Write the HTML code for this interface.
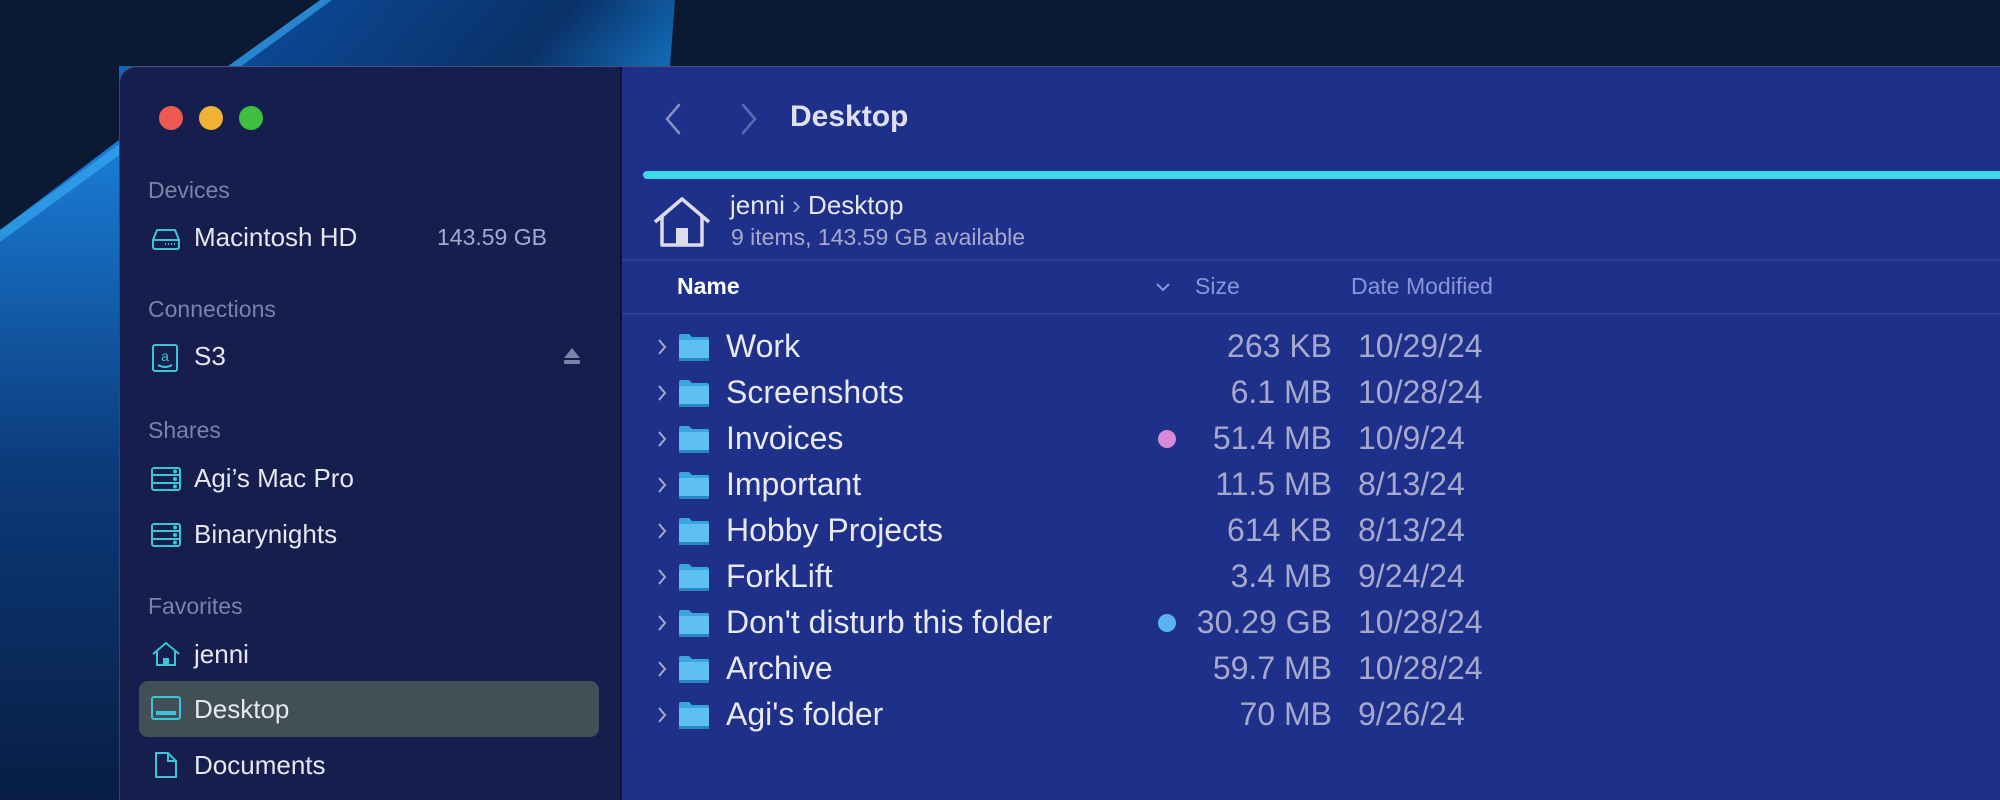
<!DOCTYPE html>
<html><head><meta charset="utf-8"><style>
*{margin:0;padding:0;box-sizing:border-box}
html,body{width:2000px;height:800px;overflow:hidden}
body{background:#0a1a33;font-family:"Liberation Sans",sans-serif;position:relative}
.abs{position:absolute;white-space:nowrap}
.win{position:absolute;left:119px;top:66px;width:1900px;height:734px;border-radius:18px 0 0 0;overflow:hidden;border-top:1px solid #4a5280;border-left:1px solid #3a4270}
.side{position:absolute;left:0;top:0;width:500px;height:100%;background:#151e4d}
.main{position:absolute;left:500px;top:0;width:1400px;height:100%;background:#1e308a;border-left:2px solid #0c1233}
.hdr{color:#7d83a6;font-size:23px}
.item{color:#e6e6ee;font-size:26px}
.name{color:#e8e8f0;font-size:32px}
.num{color:#a6a9cc;font-size:32px}
</style></head><body>
<svg class="abs" style="left:0;top:0" width="2000" height="800">
<defs>
<linearGradient id="g1" x1="0" y1="0.3" x2="1" y2="0.6"><stop offset="0" stop-color="#1d8fea"/><stop offset="0.25" stop-color="#0c4c9c"/><stop offset="0.7" stop-color="#0a3168"/><stop offset="0.95" stop-color="#1478c8"/><stop offset="1" stop-color="#22b0f0"/></linearGradient>
<linearGradient id="g3" x1="0" y1="0" x2="0" y2="1"><stop offset="0" stop-color="#1a7ed8"/><stop offset="0.5" stop-color="#0c3a7a"/><stop offset="1" stop-color="#081e44"/></linearGradient>
</defs>
<polygon points="0,230 320,0 675,0 670,66 119,66 119,140 0,240" fill="url(#g1)"/>
<polygon points="0,230 119,140 119,800 0,800" fill="url(#g3)"/>
<polygon points="0,230 320,0 332,0 0,242" fill="#3ab0f8" opacity="0.6"/>
</svg>
<div class="win">
 <div class="side">
  <div class="abs" style="left:39px;top:39px;width:24px;height:24px;border-radius:50%;background:#ec5a52"></div>
  <div class="abs" style="left:79px;top:39px;width:24px;height:24px;border-radius:50%;background:#efb232"></div>
  <div class="abs" style="left:119px;top:39px;width:24px;height:24px;border-radius:50%;background:#3ebf3f"></div>

  <div class="abs hdr" style="left:28px;top:110px">Devices</div>
  <svg class="abs" style="left:31px;top:161px" width="30" height="22" viewBox="0 0 30 22" fill="none" stroke="#3cc4d8" stroke-width="2"><path d="M6 2h18l4 10v7a2 2 0 0 1-2 2H4a2 2 0 0 1-2-2v-7z M2 12h26"/><path d="M14 16h1M17 16h1M20 16h1M23 16h1" stroke-width="2"/></svg>
  <div class="abs item" style="left:74px;top:155px">Macintosh HD</div>
  <div class="abs" style="left:317px;top:157px;color:#a6a9cc;font-size:23px">143.59 GB</div>

  <div class="abs hdr" style="left:28px;top:229px">Connections</div>
  <svg class="abs" style="left:31px;top:276px" width="28" height="30" viewBox="0 0 28 30" fill="none" stroke="#3cc4d8" stroke-width="2"><rect x="2" y="2" width="24" height="26" rx="2"/><text x="14" y="18" font-size="14" fill="#3cc4d8" stroke="none" text-anchor="middle" font-family="Liberation Sans">a</text><path d="M7 22q7 4 14 0"/></svg>
  <div class="abs item" style="left:74px;top:274px">S3</div>
  <svg class="abs" style="left:443px;top:280px" width="18" height="18" viewBox="0 0 18 18" fill="#7d83a6"><path d="M9 1l8 10H1z"/><rect x="1" y="13" width="16" height="4" rx="1"/></svg>

  <div class="abs hdr" style="left:28px;top:350px">Shares</div>
  <svg class="abs" style="left:31px;top:400px" width="30" height="24" viewBox="0 0 30 24" fill="none" stroke="#3cc4d8" stroke-width="2"><rect x="1" y="1" width="28" height="22" rx="2"/><path d="M1 8h28M1 16h28"/><circle cx="24" cy="4.5" r="1" fill="#3cc4d8"/><circle cx="24" cy="12" r="1" fill="#3cc4d8"/><circle cx="24" cy="19.5" r="1" fill="#3cc4d8"/></svg>
  <div class="abs item" style="left:74px;top:396px">Agi’s Mac Pro</div>
  <svg class="abs" style="left:31px;top:456px" width="30" height="24" viewBox="0 0 30 24" fill="none" stroke="#3cc4d8" stroke-width="2"><rect x="1" y="1" width="28" height="22" rx="2"/><path d="M1 8h28M1 16h28"/><circle cx="24" cy="4.5" r="1" fill="#3cc4d8"/><circle cx="24" cy="12" r="1" fill="#3cc4d8"/><circle cx="24" cy="19.5" r="1" fill="#3cc4d8"/></svg>
  <div class="abs item" style="left:74px;top:452px">Binarynights</div>

  <div class="abs hdr" style="left:28px;top:526px">Favorites</div>
  <svg class="abs" style="left:31px;top:574px" width="30" height="26" viewBox="0 0 30 26" fill="none" stroke="#3cc4d8" stroke-width="2"><path d="M2 13L15 2l13 11M6 10v14h18V10"/><rect x="12" y="17" width="6" height="7" fill="#3cc4d8" stroke="none"/></svg>
  <div class="abs item" style="left:74px;top:572px">jenni</div>

  <div class="abs" style="left:19px;top:614px;width:460px;height:56px;border-radius:9px;background:#434f57"></div>
  <svg class="abs" style="left:31px;top:629px" width="30" height="24" viewBox="0 0 30 24" fill="none" stroke="#3cc4d8" stroke-width="2"><rect x="1" y="1" width="28" height="22" rx="2"/><rect x="5" y="15" width="20" height="4" fill="#3cc4d8" stroke="none"/></svg>
  <div class="abs item" style="left:74px;top:627px">Desktop</div>

  <svg class="abs" style="left:34px;top:684px" width="24" height="28" viewBox="0 0 24 28" fill="none" stroke="#3cc4d8" stroke-width="2"><path d="M2 2h12l8 8v16H2z M14 2v8h8"/></svg>
  <div class="abs item" style="left:74px;top:683px">Documents</div>
 </div>
 <div class="main">
  <svg class="abs" style="left:41px;top:36px" width="20" height="32" viewBox="0 0 20 32" fill="none" stroke="#8a90c8" stroke-width="2.5" stroke-linecap="round"><path d="M16 2L4 16l12 14"/></svg>
  <svg class="abs" style="left:117px;top:36px" width="20" height="32" viewBox="0 0 20 32" fill="none" stroke="#5f68b0" stroke-width="2.5" stroke-linecap="round"><path d="M4 2l12 14L4 30"/></svg>
  <div class="abs" style="left:168px;top:33px;color:#dde0f2;font-size:30px;font-weight:bold">Desktop</div>

  <div class="abs" style="left:21px;top:104px;width:1400px;height:8px;border-radius:4px;background:#3ed8e8"></div>

  <svg class="abs" style="left:30px;top:128px" width="60" height="54" viewBox="0 0 60 54" fill="none" stroke="#dcdcec" stroke-width="3.5" stroke-linejoin="round"><path d="M3 27L30 4l27 23M10 21v29h40V21"/><rect x="24" y="33" width="12" height="17" fill="#dcdcec" stroke="none"/></svg>
  <div class="abs" style="left:108px;top:123px;color:#e6e6f0;font-size:26px">jenni <span style="color:#9aa0c8">›</span> Desktop</div>
  <div class="abs" style="left:109px;top:157px;color:#a6a9cc;font-size:23px">9 items, 143.59 GB available</div>

  <div class="abs" style="left:0;top:192px;width:1400px;height:2px;background:#2c3f98"></div>
  <div class="abs" style="left:55px;top:206px;color:#fff;font-size:23px;font-weight:bold">Name</div>
  <svg class="abs" style="left:533px;top:215px" width="16" height="10" viewBox="0 0 16 10" fill="none" stroke="#8a95d8" stroke-width="2"><path d="M2 2l6 6 6-6"/></svg>
  <div class="abs" style="left:573px;top:206px;color:#8a95d8;font-size:23px">Size</div>
  <div class="abs" style="left:729px;top:206px;color:#8a95d8;font-size:23px">Date Modified</div>
  <div class="abs" style="left:0;top:246px;width:1400px;height:2px;background:#2c3f98"></div>

  <div id="rows"></div>
 </div>
</div>
<script>
const rows=[["Work","263 KB","10/29/24",""],["Screenshots","6.1 MB","10/28/24",""],["Invoices","51.4 MB","10/9/24","#d88ad8"],["Important","11.5 MB","8/13/24",""],["Hobby Projects","614 KB","8/13/24",""],["ForkLift","3.4 MB","9/24/24",""],["Don't disturb this folder","30.29 GB","10/28/24","#5ab4f0"],["Archive","59.7 MB","10/28/24",""],["Agi's folder","70 MB","9/26/24",""]];
let h="";
rows.forEach((r,i)=>{const cy=280+i*46;
h+=`<svg class="abs" style="left:34px;top:${cy-10}px" width="12" height="20" viewBox="0 0 12 20" fill="none" stroke="#a6a9cc" stroke-width="2"><path d="M3 3l6 7-6 7"/></svg>`;
h+=`<svg class="abs" style="left:56px;top:${cy-15}px" width="32" height="30" viewBox="0 0 32 30"><path d="M1 4a2 2 0 0 1 2-2h8l3 3h15a2 2 0 0 1 2 2v20a2 2 0 0 1-2 2H3a2 2 0 0 1-2-2z" fill="#3aa6e0"/><rect x="1" y="8" width="30" height="20" rx="2" fill="#5ec0f0"/><rect x="1" y="26" width="30" height="3" fill="#2a86c0"/></svg>`;
h+=`<div class="abs name" style="left:104px;top:${cy-19}px">${r[0]}</div>`;
h+=`<div class="abs num" style="right:${1400-712}px;top:${cy-19}px">${r[1]}</div>`;
h+=`<div class="abs num" style="left:736px;top:${cy-19}px">${r[2]}</div>`;
if(r[3])h+=`<div class="abs" style="left:536px;top:${cy-9}px;width:18px;height:18px;border-radius:50%;background:${r[3]}"></div>`;
});
document.getElementById("rows").innerHTML=h;
</script>
</body></html>
